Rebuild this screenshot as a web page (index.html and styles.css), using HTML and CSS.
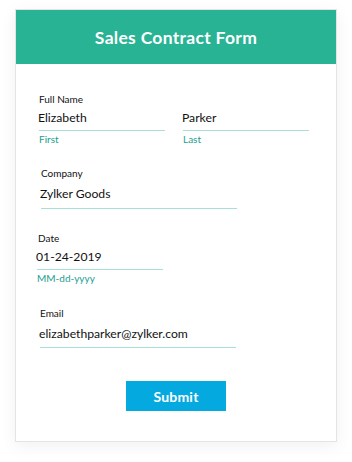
FILE: index.html
```html
<!DOCTYPE html>
<html>
<head>
<meta charset="utf-8">
<link rel="stylesheet" href="styles.css">
</head>
<body>
<div class="card">
  <div class="header">Sales Contract Form</div>
  <div class="body">
    <div class="field f-name">
      <div class="label">Full Name</div>
      <div class="row">
        <div class="part">
          <div class="value">Elizabeth</div>
          <div class="sub">First</div>
        </div>
        <div class="part">
          <div class="value">Parker</div>
          <div class="sub">Last</div>
        </div>
      </div>
    </div>
    <div class="field f-company">
      <div class="label">Company</div>
      <div class="value wide">Zylker Goods</div>
    </div>
    <div class="field f-date">
      <div class="label">Date</div>
      <div class="value">01-24-2019</div>
      <div class="sub">MM-dd-yyyy</div>
    </div>
    <div class="field f-email">
      <div class="label">Email</div>
      <div class="value wide">elizabethparker@zylker.com</div>
    </div>
    <div class="actions">
      <button class="submit">Submit</button>
    </div>
  </div>
</div>
</body>
</html>
```

FILE: styles.css
```css
html, body {
  margin: 0;
  padding: 0;
  background: #ffffff;
}
body {
  font-family: Lato, "Open Sans", sans-serif;
  color: #111;
  width: 352px;
  height: 462px;
  overflow: hidden;
}
.card {
  margin: 9px 15px 0 15px;
  width: 320px;
  border: 1px solid #e4e4e4;
  background: #fff;
  box-shadow: 0 4px 16px rgba(0,0,0,0.06);
}
.header {
  background: #27b394;
  color: #fff;
  height: 54px;
  display: flex;
  align-items: center;
  justify-content: center;
  font-size: 17.5px;
  font-weight: 700;
  letter-spacing: 0.3px;
}
.body {
  padding: 29px 0 30px 0;
}
.field {
  display: flex;
  flex-direction: column;
}
.label {
  font-size: 10px;
  line-height: 12px;
  color: #111;
}
.value {
  font-size: 12.2px;
  line-height: 16px;
  color: #111;
  width: 126px;
  border-bottom: 1px solid #a8dfdb;
  padding-bottom: 4px;
  margin-top: 5px;
  text-indent: -1px;
}
.value.wide {
  width: 196px;
  padding-bottom: 6px;
}
.sub {
  font-size: 10px;
  line-height: 12px;
  color: #1a9e8f;
  margin-top: 2px;
}
.row {
  display: flex;
  gap: 18px;
}
.part {
  display: flex;
  flex-direction: column;
}
.f-name { padding-left: 23px; }
.f-company { padding-left: 25px; margin-top: 22px; }
.f-company .value { margin-top: 7px; }
.f-date { padding-left: 21px; margin-top: 23px; }
.f-date .label { padding-left: 1px; }
.f-email { padding-left: 24px; margin-top: 23px; }
.f-email .value { margin-top: 7px; padding-bottom: 5px; }
.actions {
  display: flex;
  justify-content: center;
  margin-top: 33px;
}
.submit {
  width: 100px;
  height: 30px;
  border: none;
  background: #03a9df;
  color: #fff;
  font-family: Lato, "Open Sans", sans-serif;
  font-size: 14px;
  font-weight: 700;
  letter-spacing: 0.2px;
  padding: 0;
}
```
